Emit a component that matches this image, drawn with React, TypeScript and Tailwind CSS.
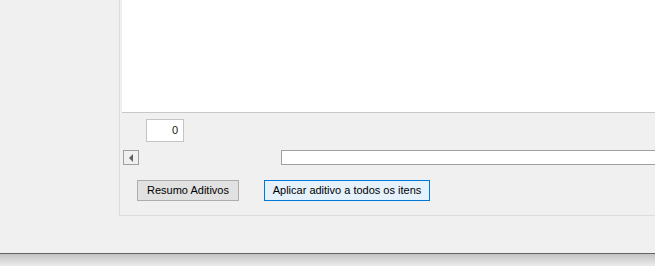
import React from 'react';

const App: React.FC = () => {
  return (
    <div className="w-[655px] h-[266px] overflow-hidden bg-[#f0f0f0] font-['Liberation_Sans',Arial,sans-serif] text-[11px] text-black">
      {/* Window body */}
      <div className="h-[254px] flex border-b border-[#646464]">
        <div className="w-[119px] shrink-0" />

        {/* Panel */}
        <div className="flex-1 min-w-0 h-[216px] border-l border-b border-[#dcdcdc]">
          {/* Grid area */}
          <div className="ml-[2px] h-[113px] bg-white border-b border-[#c8c8c8]" />

          {/* Counter */}
          <div className="mt-[6px] ml-[26px] w-[38px] h-[23px] bg-white border border-[#c4c4c4] flex items-center justify-end pr-[5px]">
            <span className="text-[#1a1a1a]">0</span>
          </div>

          {/* Scroll row */}
          <div className="mt-[8px] flex items-start">
            <div className="ml-[3px] w-[16px] h-[15px] bg-[#f0f0f0] border border-[#a0a0a0] flex items-center justify-center">
              <div className="w-0 h-0 border-y-[4px] border-y-transparent border-r-[4px] border-r-[#606060] mr-[1px]" />
            </div>
            <div className="ml-[142px] flex-1 h-[15px] bg-white border-y border-l border-[#a0a0a0]" />
          </div>

          {/* Buttons */}
          <div className="mt-[15px] flex">
            <button className="ml-[17px] w-[102px] h-[21px] bg-[#e1e1e1] border border-[#adadad] flex items-center justify-center">
              Resumo Aditivos
            </button>
            <button className="ml-[25px] w-[166px] h-[21px] bg-[#e5f1fb] border border-[#0078d7] flex items-center justify-center">
              Aplicar aditivo a todos os itens
            </button>
          </div>
        </div>
      </div>

      {/* Window shadow */}
      <div className="h-[12px] bg-gradient-to-b from-[#c4c4c4] to-[#ececec]" />
    </div>
  );
};

export default App;
